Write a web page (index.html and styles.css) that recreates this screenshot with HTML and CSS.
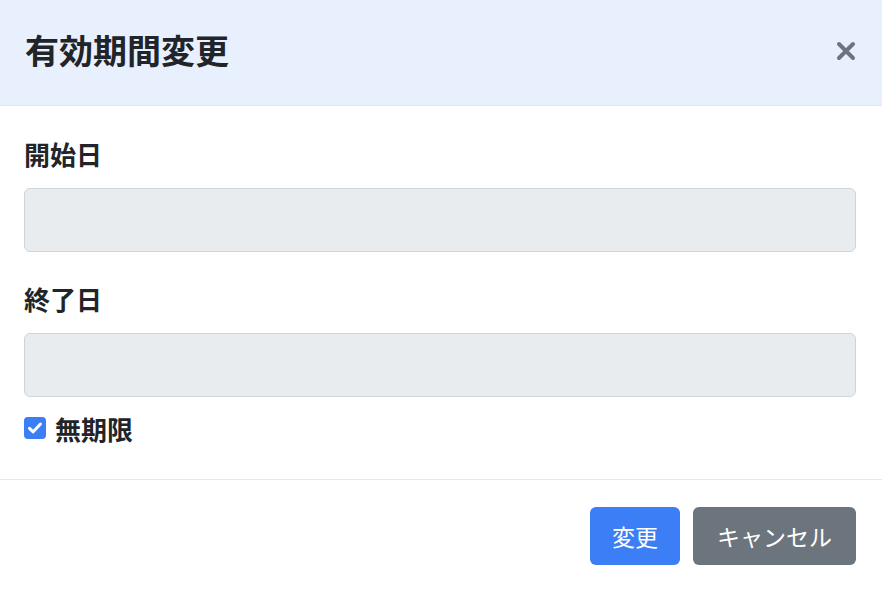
FILE: index.html
```html
<!DOCTYPE html>
<html lang="ja">
<head>
    <meta charset="UTF-8">
    <title>有効期間変更</title>
    <link rel="stylesheet" href="styles.css">
</head>
<body>
    <div class="modal">
        <div class="modal-header">
            <h5 class="modal-title">有効期間変更</h5>
            <button class="close" type="button">
                <svg width="20" height="20" viewBox="0 0 20 20">
                    <path d="M3 3 L17 17 M17 3 L3 17" stroke="#6c757d" stroke-width="4" stroke-linecap="round"/>
                </svg>
            </button>
        </div>
        <div class="modal-body">
            <label class="form-label">開始日</label>
            <input class="form-control" type="text" disabled>
            <label class="form-label second">終了日</label>
            <input class="form-control" type="text" disabled>
            <div class="form-check">
                <span class="check-box">
                    <svg width="18" height="18" viewBox="0 0 18 18">
                        <path d="M3.5 9.3 L7.2 12.8 L14.5 5" fill="none" stroke="#fff" stroke-width="3" stroke-linecap="round" stroke-linejoin="round"/>
                    </svg>
                </span>
                <span class="check-label">無期限</span>
            </div>
        </div>
        <div class="modal-footer">
            <button class="btn btn-primary" type="button">変更</button>
            <button class="btn btn-secondary" type="button">キャンセル</button>
        </div>
    </div>
</body>
</html>
```

FILE: styles.css
```css
body {
    margin: 0;
    font-family: "Noto Sans CJK JP", "Noto Sans", sans-serif;
    color: #212529;
    background: #fff;
}
.modal {
    width: 882px;
    height: 592px;
}
.modal-header {
    display: flex;
    align-items: center;
    justify-content: space-between;
    height: 106px;
    padding: 0 26px 0 25px;
    background: #e8f0fe;
    border-bottom: 1px solid #e3e6ea;
    box-sizing: border-box;
}
.modal-title {
    margin: -5px 0 0;
    font-size: 34px;
    font-weight: 700;
    line-height: 1.2;
}
.close {
    border: 0;
    background: none;
    padding: 0;
    display: flex;
    margin-top: -4px;
}
.modal-body {
    padding: 29px 26px 30px 24px;
}
.form-label {
    display: block;
    font-size: 26px;
    font-weight: 700;
    line-height: 38px;
    margin-bottom: 15px;
}
.form-label.second {
    margin-top: 28px;
}
.form-control {
    display: block;
    width: 100%;
    height: 64px;
    box-sizing: border-box;
    background: #e9ecef;
    border: 1px solid #ced4da;
    border-radius: 6px;
    margin: 0;
}
.form-check {
    display: flex;
    align-items: center;
    gap: 9px;
    height: 38px;
    margin-top: 12px;
    margin-bottom: 2px;
}
.check-box {
    width: 22px;
    height: 22px;
    border-radius: 4px;
    background: #3b7ef6;
    display: flex;
    align-items: center;
    justify-content: center;
}
.check-label {
    font-size: 26px;
    font-weight: 700;
}
.modal-footer {
    display: flex;
    justify-content: flex-end;
    gap: 13px;
    padding: 27px 26px;
    border-top: 1px solid #e6e8eb;
}
.btn {
    height: 58px;
    border: 0;
    border-radius: 6px;
    padding: 0 22px;
    font-family: inherit;
    font-size: 23px;
    color: #fff;
}
.btn-primary {
    background: #3b7ef6;
}
.btn-secondary {
    background: #6c757d;
    padding: 0 24px;
}
```
